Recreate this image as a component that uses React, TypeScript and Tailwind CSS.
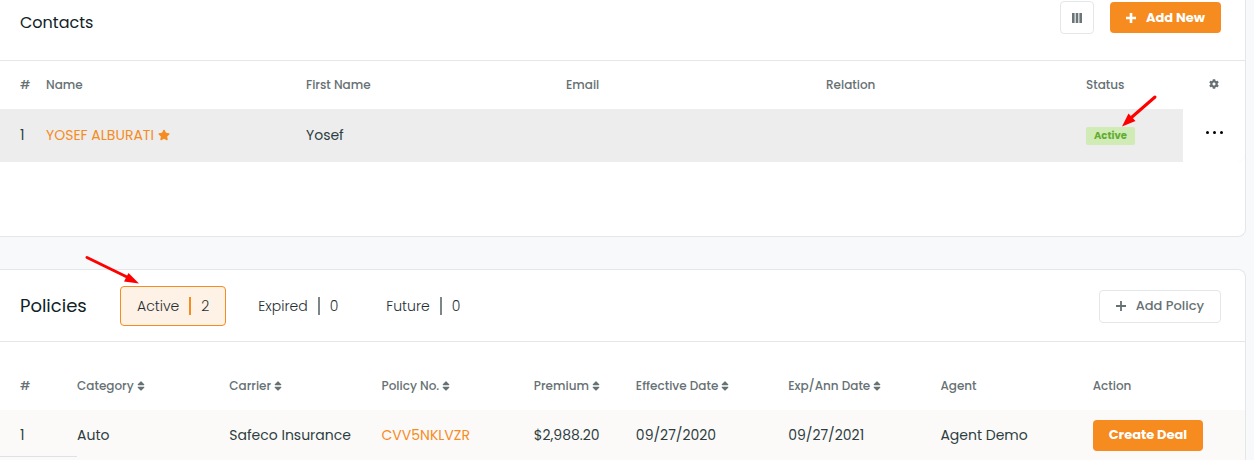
import type { ReactNode } from 'react';
import { FaCog, FaSort, FaStar } from 'react-icons/fa';

const contacts = [{ id: 1, name: 'YOSEF ALBURATI', firstName: 'Yosef', email: '', relation: '', status: 'Active' }];

const tabs = [
  { label: 'Active', count: 2 },
  { label: 'Expired', count: 0 },
  { label: 'Future', count: 0 },
];

const policyColumns = [
  { label: 'Category', sortable: true },
  { label: 'Carrier', sortable: true },
  { label: 'Policy No.', sortable: true },
  { label: 'Premium', sortable: true, className: 'w-[102px]' },
  { label: 'Effective Date', sortable: true },
  { label: 'Exp/Ann Date', sortable: true },
  { label: 'Agent' },
  { label: 'Action' },
];

const policies = [
  {
    id: 1,
    category: 'Auto',
    carrier: 'Safeco Insurance',
    number: 'CVV5NKLVZR',
    premium: '$2,988.20',
    effective: '09/27/2020',
    expires: '09/27/2021',
    agent: 'Agent Demo',
  },
];

function PlusIcon({ weight }: { weight: number }) {
  return (
    <svg width="10" height="10" viewBox="0 0 10 10" stroke="currentColor" strokeWidth={weight}>
      <path d="M5 0v10M0 5h10" />
    </svg>
  );
}

function PrimaryButton({ children }: { children: ReactNode }) {
  return (
    <button className="flex h-[31px] items-center gap-[10px] whitespace-nowrap rounded bg-[#f68b1f] px-4 text-[13px] font-bold text-white">
      {children}
    </button>
  );
}

function ContactsCard() {
  return (
    <section className="min-h-[237px] rounded-br-lg border-r border-b border-[#e4e7ea] bg-white">
      <header className="flex h-[61px] items-start justify-between border-b border-[#e4e7ea] pr-6 pl-5">
        <h2 className="text-base leading-[46px] text-[#0f2327]">Contacts</h2>
        <div className="flex items-center gap-4 pt-px">
          <button aria-label="Columns" className="flex h-[33px] w-[34px] items-center justify-center rounded border border-[#e4e7ea] text-[#6b7678]">
            <svg width="10" height="10" viewBox="0 0 10 10" fill="currentColor">
              <path d="M0 0h2.600v10H0zM3.700 0h2.600v10H3.700zM7.400 0H10v10H7.400z" />
            </svg>
          </button>
          <PrimaryButton>
            <PlusIcon weight={2.6} />
            Add New
          </PrimaryButton>
        </div>
      </header>
      <table className="w-full table-fixed text-left">
        <thead>
          <tr className="h-12 text-xs text-[#667174] [&>th]:font-medium">
            <th className="w-[46px] pl-5">#</th>
            <th>Name</th>
            <th>First Name</th>
            <th>Email</th>
            <th>Relation</th>
            <th className="w-[97px]">Status</th>
            <th className="w-[62px] pb-0.5">
              <button aria-label="Settings" className="mx-auto block">
                <FaCog className="size-[10px]" />
              </button>
            </th>
          </tr>
        </thead>
        <tbody>
          {contacts.map((c) => (
            <tr key={c.id} className="h-[53px] bg-[#ededed] text-sm text-[#2d3e42] [&>td]:pb-0.5">
              <td className="pl-5">{c.id}</td>
              <td>
                <a href="#contact" className="flex items-center gap-1 text-[#f68b1f]">
                  {c.name}
                  <FaStar className="size-3" />
                </a>
              </td>
              <td>{c.firstName}</td>
              <td>{c.email}</td>
              <td>{c.relation}</td>
              <td>
                <span className="inline-block rounded-xs bg-[#d0ebb5] px-2 text-[10px] leading-[18px] font-bold text-[#62ad32]">{c.status}</span>
              </td>
              <td className="rounded-br-lg bg-white">
                <button aria-label="More" className="mx-auto mb-1 flex gap-1">
                  <span className="size-[3px] rounded-full bg-black" />
                  <span className="size-[3px] rounded-full bg-black" />
                  <span className="size-[3px] rounded-full bg-black" />
                </button>
              </td>
            </tr>
          ))}
        </tbody>
      </table>
    </section>
  );
}

function PoliciesCard() {
  return (
    <section className="rounded-tr-lg border-t border-r border-[#e4e7ea] bg-white">
      <header className="flex items-center justify-between border-b border-[#e4e7ea] pt-4 pr-6 pb-[15px] pl-5">
        <div className="flex items-center">
          <h2 className="w-[100px] text-lg text-[#0f2327]">Policies</h2>
          <div className="flex gap-4">
            {tabs.map((tab, i) => (
              <button
                key={tab.label}
                className={
                  i === 0
                    ? 'flex h-10 items-center gap-[10px] rounded border border-[#f68b1f] bg-[#fef1e5] px-4 text-sm font-light text-[#1f3034]'
                    : 'flex h-10 items-center gap-[10px] rounded px-4 text-sm font-light text-[#1f3034]'
                }
              >
                {tab.label}
                <span className={i === 0 ? 'h-[18px] w-[2px] bg-[#f68b1f]' : 'h-[18px] w-[2px] bg-[#7c8689]'} />
                {tab.count}
              </button>
            ))}
          </div>
        </div>
        <button className="flex h-[33px] items-center gap-[10px] rounded border border-[#e4e7ea] px-4 text-[13px] font-medium text-[#667174]">
          <PlusIcon weight={1.8} />
          Add Policy
        </button>
      </header>
      <table className="w-full table-fixed text-left">
        <thead>
          <tr className="h-[68px] text-xs text-[#667174] [&>th]:pt-5 [&>th]:font-medium">
            <th className="w-[77px] pl-5">#</th>
            {policyColumns.map((col) => (
              <th key={col.label} className={col.className}>
                {col.sortable ? (
                  <button className="flex items-center gap-px whitespace-nowrap">
                    {col.label}
                    <FaSort className="size-3" />
                  </button>
                ) : (
                  col.label
                )}
              </th>
            ))}
          </tr>
        </thead>
        <tbody>
          {policies.map((p) => (
            <tr key={p.id} className="h-[50px] bg-[#fcfaf8] text-sm text-[#2d3e42]">
              <td className="pl-5">{p.id}</td>
              <td>{p.category}</td>
              <td>{p.carrier}</td>
              <td>
                <a href="#policy" className="text-[#f68b1f]">{p.number}</a>
              </td>
              <td>{p.premium}</td>
              <td>{p.effective}</td>
              <td>{p.expires}</td>
              <td>{p.agent}</td>
              <td>
                <PrimaryButton>Create Deal</PrimaryButton>
              </td>
            </tr>
          ))}
        </tbody>
      </table>
    </section>
  );
}

export default function App() {
  return (
    <main className="relative flex min-h-screen flex-col gap-8 bg-[#f8f9fb] pr-2 font-[Poppins,Inter,sans-serif]">
      <ContactsCard />
      <PoliciesCard />
      {/* callout arrows */}
      <svg className="pointer-events-none absolute top-[94px] right-[96px]" width="40" height="34" viewBox="0 0 40 34" fill="#f00">
        <path d="M37 3 14 23" stroke="#f00" strokeWidth="3" strokeLinecap="round" />
        <path d="M4 32.500 10.500 19.500 17.500 27Z" />
      </svg>
      <svg className="pointer-events-none absolute top-[254px] left-[84px]" width="58" height="34" viewBox="0 0 58 34" fill="#f00">
        <path d="M3 3.500 43 23" stroke="#f00" strokeWidth="3" strokeLinecap="round" />
        <path d="M55 29.500 40 27.500 44.500 19Z" />
      </svg>
      <div className="absolute bottom-[3px] left-0 w-[77px] border-b border-[#dfe0ee]" />
    </main>
  );
}
